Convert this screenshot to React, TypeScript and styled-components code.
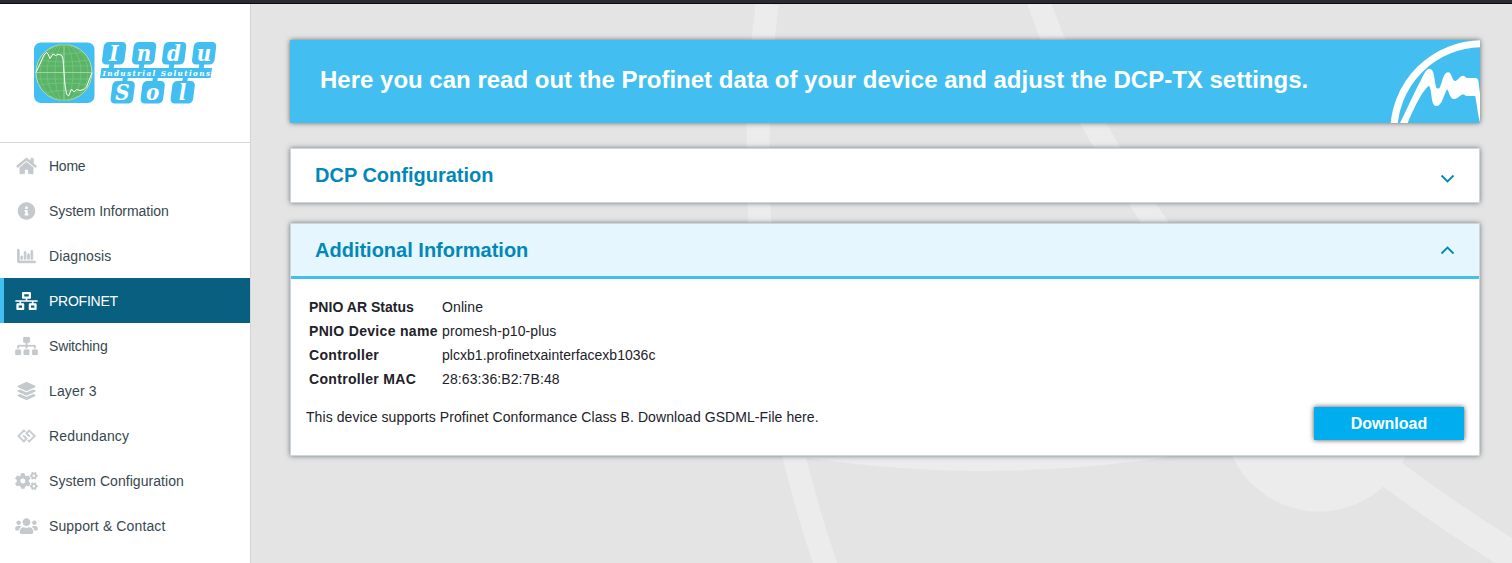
import { useState } from "react";
import type { ReactNode } from "react";
import styled, { createGlobalStyle } from "styled-components";
import {
  FaHome,
  FaInfoCircle,
  FaRegChartBar,
  FaNetworkWired,
  FaSitemap,
  FaLayerGroup,
  FaGg,
  FaCogs,
  FaUsers,
} from "react-icons/fa";

const GlobalStyle = createGlobalStyle`
  * { box-sizing: border-box; }
  body {
    margin: 0;
    overflow: hidden;
    font-family: "Liberation Sans", Arial, sans-serif;
    font-size: 14px;
    color: #212129;
  }
`;

const Page = styled.div`
  display: flex;
  flex-direction: column;
  height: 100vh;
`;

const TopBar = styled.div`
  flex: none;
  height: 4px;
  background: #2b2a33;
  border-bottom: 1px solid #0c0c0d;
`;

const Body = styled.div`
  display: flex;
  flex: 1;
  min-height: 0;
`;

const Sidebar = styled.aside`
  flex: none;
  width: 251px;
  background: #fff;
  border-right: 1px solid #d3d6d8;
`;

const LogoBox = styled.div`
  height: 139px;
  padding: 37px 0 0 33px;
  border-bottom: 1px solid #d3d8db;

  svg { display: block; }
`;

const NavItem = styled.a<{ $active?: boolean; $track: number; $bold?: number }>`
  display: flex;
  align-items: center;
  height: 45px;
  padding-left: ${(p) => (p.$active ? "11px" : "15px")};
  border-left: ${(p) => (p.$active ? "4px solid #42bff0" : "none")};
  background: ${(p) => (p.$active ? "#085f80" : "transparent")};
  color: ${(p) => (p.$active ? "#fff" : "#37474f")};
  letter-spacing: ${(p) => p.$track}px;
  cursor: pointer;

  svg {
    width: 23px;
    height: 18px;
    margin-right: 11px;
    overflow: visible;
    stroke-width: ${(p) => p.$bold || 0};
    color: ${(p) => (p.$active ? "#fff" : "#c3c9cc")};
  }
`;

const Content = styled.main`
  position: relative;
  flex: 1;
  padding: 36px 32px 0 39px;
  background: #e4e4e4;
`;

const Backdrop = styled.svg`
  position: absolute;
  inset: 0;
`;

const Stack = styled.div`
  position: relative;
  display: flex;
  flex-direction: column;
`;

const Banner = styled.header`
  display: flex;
  align-items: center;
  justify-content: space-between;
  height: 83px;
  padding-left: 30px;
  margin-bottom: 25px;
  background: #42bff0;
  box-shadow: 0 0 5px rgba(0, 0, 0, 0.55);
`;

const BannerTitle = styled.h1`
  margin: 0 0 4px;
  font-size: 24px;
  line-height: 28px;
  color: #fff;
  white-space: nowrap;
`;

const Panel = styled.section`
  margin-bottom: 20px;
  background: #fff;
  border: 1px solid #cfd6da;
  box-shadow: 0 0 5px rgba(38, 50, 56, 0.6);
`;

const PanelHeader = styled.div<{ $open: boolean }>`
  display: flex;
  align-items: center;
  justify-content: space-between;
  height: ${(p) => (p.$open ? "55px" : "53px")};
  padding: ${(p) => (p.$open ? "0 24px" : "0 24px 2px")};
  background: ${(p) => (p.$open ? "#e5f6fe" : "#fff")};
  border-bottom: ${(p) => (p.$open ? "3px solid #42bff0" : "none")};
  cursor: pointer;
`;

const PanelTitle = styled.h2`
  margin: 0;
  font-size: 20px;
  line-height: 24px;
  color: #0288b8;
`;

const ArrowIcon = styled.svg<{ $up: boolean }>`
  margin-top: ${(p) => (p.$up ? "0" : "8px")};
`;

const PanelBody = styled.div`
  padding: 16px 15px 15px;
`;

const InfoTable = styled.dl`
  display: grid;
  grid-template-columns: 129px 1fr;
  column-gap: 4px;
  margin: 0 3px;
  line-height: 24px;

  dt { font-weight: bold; letter-spacing: 0.32px; white-space: nowrap; }
  dt:first-of-type { letter-spacing: 0.03px; }
  dd { margin: 0; letter-spacing: 0.1px; }
  dd:nth-of-type(3) { letter-spacing: 0.03px; }
`;

const Footer = styled.div`
  display: flex;
  justify-content: space-between;
  align-items: flex-start;
  margin-top: 16px;
`;

const FooterText = styled.p`
  margin: 2px 0 0;
  line-height: 17px;
  letter-spacing: 0.07px;
`;

const DownloadButton = styled.button`
  width: 150px;
  height: 33px;
  padding: 0;
  border: none;
  background: #00aeef;
  color: #fff;
  font: bold 16px "Liberation Sans", Arial, sans-serif;
  box-shadow: 0 0 5px rgba(0, 0, 0, 0.7);
`;

const navItems = [
  { label: "Home", icon: <FaHome />, track: -0.25, bold: 10 },
  { label: "System Information", icon: <FaInfoCircle />, track: -0.05 },
  { label: "Diagnosis", icon: <FaRegChartBar />, track: 0.1, bold: 24 },
  { label: "PROFINET", icon: <FaNetworkWired />, track: -0.25 },
  { label: "Switching", icon: <FaSitemap />, track: -0.15, bold: 6 },
  { label: "Layer 3", icon: <FaLayerGroup />, track: 0.15 },
  { label: "Redundancy", icon: <FaGg />, track: 0.15, bold: 22 },
  { label: "System Configuration", icon: <FaCogs />, track: 0.05 },
  { label: "Support & Contact", icon: <FaUsers />, track: 0.12 },
];

const info = [
  ["PNIO AR Status", "Online"],
  ["PNIO Device name", "promesh-p10-plus"],
  ["Controller", "plcxb1.profinetxainterfacexb1036c"],
  ["Controller MAC", "28:63:36:B2:7B:48"],
];

// [letter, x, y]
const tiles: [string, number, number][] = [
  ["I", 68.5, 1], ["n", 98.5, 1], ["d", 128.5, 1], ["u", 158.5, 1],
  ["S", 77, 40], ["o", 107, 40], ["l", 137, 40],
];

function Logo() {
  return (
    <svg width="186" height="64" viewBox="0 0 186 64">
      <rect x="1" y="1.5" width="60.5" height="60.5" rx="7" fill="#42bff0" />
      <circle cx="31" cy="31.5" r="28" fill="#5ab466" stroke="#b9dfb4" strokeWidth="1" />
      <g fill="none" stroke="#7cc586" strokeWidth="0.7">
        <ellipse cx="31" cy="31.5" rx="9" ry="28" />
        <ellipse cx="31" cy="31.5" rx="17" ry="28" />
        <ellipse cx="31" cy="31.5" rx="24" ry="28" />
        <path d="M12 11Q31 15 50 11M6 19Q31 23 56 19M4 25H58M4 38H58M6 44Q31 40 56 44M12 52Q31 47 50 52" />
      </g>
      <path d="M3 31.5H59M31 3.5V59.5" stroke="#a5d8a8" strokeWidth="0.900" />
      <path
        d="M3 31.5L11 14L13.500 11.500L15 13L17 17.500L20 13L22.500 14.500L25 13.500L28.500 14L30 18L32 44L33.500 53L35.500 55L38.500 48L41 51L43.500 48.500L47 49.500L51 48.500L53.500 46L59 31.500"
        fill="none" stroke="#fff" strokeWidth="1" strokeLinejoin="round"
      />
      <g fill="#42bff0">
        <path d="M68.500 27H179L177.500 37H67Z" />
        {tiles.map(([c, x, y]) => (
          <rect key={c} x={x} y={y} width="22.500" height="22.500" rx="4.500" transform={`translate(${(y + 22) * 0.125} 0) skewX(-7)`} />
        ))}
        <path d="M76.500 22h5l-1 6h-5zM106.500 22h5l-1 6h-5zM136.500 22h5l-1 6h-5zM166.500 22h5l-1 6h-5zM90 36h5l-1 6h-5zM120 36h5l-1 6h-5zM150 36h5l-1 6h-5z" />
      </g>
      <g fill="#fff" fontFamily="'DejaVu Serif Condensed', 'DejaVu Serif', serif" fontWeight="bold" fontStyle="italic">
        {tiles.map(([c, x, y]) => (
          <text key={c} x={x + 12.500} y={y + 19.300} fontSize="22" textAnchor="middle">{c}</text>
        ))}
        <text x="69.500" y="34.900" fontSize="8" textLength="107.500">Industrial Solutions</text>
      </g>
    </svg>
  );
}

function BannerArt() {
  return (
    <svg width="100" height="83" viewBox="0 0 100 83">
      <circle cx="102" cy="92" r="88.200" fill="none" stroke="#fff" strokeWidth="7.100" />
      <path
        d="M20 83C25 73 32 57 41 40C44 34 46 28.700 49.500 28.700C54.500 28.700 54 39 56 47Q57 49.500 59.500 48C62.500 43 63 32.300 68 32.300C72 32.300 72 41.300 75 41C78 40.500 80 35.700 83 35.700C85 35.700 85.500 38 88 38H95C98 38 98.500 40 98.800 44L100 54V83L98.300 75L95.300 56H87C85 56 84 54.300 83 54.300C80 55 78 59 74 59C70 59 69.500 53 67.300 49.300C64 53 62.500 66 56.500 66C50.500 66 52.500 52 49.300 46C45 47 36 63 27.700 83Z"
        fill="#fff"
      />
    </svg>
  );
}

function Arrow({ up }: { up: boolean }) {
  return (
    <ArrowIcon $up={up} width="15" height="9" viewBox="0 0 15 9">
      <path d={up ? "M1.500 7.500L7.500 1.500L13.500 7.500" : "M1.500 1.500L7.500 7.500L13.500 1.500"} fill="none" stroke="#0288b8" strokeWidth="1.800" />
    </ArrowIcon>
  );
}

function Accordion(props: { title: string; defaultOpen?: boolean; children?: ReactNode }) {
  const [open, setOpen] = useState(!!props.defaultOpen);
  return (
    <Panel>
      <PanelHeader $open={open} onClick={() => setOpen(!open)}>
        <PanelTitle>{props.title}</PanelTitle>
        <Arrow up={open} />
      </PanelHeader>
      {open && props.children}
    </Panel>
  );
}

function App() {
  const [active, setActive] = useState("PROFINET");

  return (
    <Page>
      <GlobalStyle />
      <TopBar />
      <Body>
        <Sidebar>
          <LogoBox>
            <Logo />
          </LogoBox>
          <nav>
            {navItems.map((item) => (
              <NavItem
                key={item.label}
                $active={item.label === active}
                $track={item.track}
                $bold={item.bold}
                onClick={() => setActive(item.label)}
              >
                {item.icon}
                {item.label}
              </NavItem>
            ))}
          </nav>
        </Sidebar>
        <Content>
          <Backdrop width="1261" height="559" viewBox="251 4 1261 559" fill="none" stroke="#ececec" strokeWidth="23">
            <path d="M767 4C749 150 753 350 825 563L834 590" />
            <path d="M1038 0Q1079 120 1176 252" />
            <path d="M770 440Q985 479 1200 440" />
            <path d="M1370 457Q1440 514 1570 591" strokeWidth="30" />
            <circle cx="1319" cy="416" r="95.500" fill="#ececec" stroke="none" />
          </Backdrop>
          <Stack>
            <Banner>
              <BannerTitle>Here you can read out the Profinet data of your device and adjust the DCP-TX settings.</BannerTitle>
              <BannerArt />
            </Banner>
            <Accordion title="DCP Configuration" />
            <Accordion title="Additional Information" defaultOpen>
              <PanelBody>
                <InfoTable>
                  {info.map(([name, value]) => [
                    <dt key={name}>{name}</dt>,
                    <dd key={value}>{value}</dd>,
                  ])}
                </InfoTable>
                <Footer>
                  <FooterText>This device supports Profinet Conformance Class B. Download GSDML-File here.</FooterText>
                  <DownloadButton>Download</DownloadButton>
                </Footer>
              </PanelBody>
            </Accordion>
          </Stack>
        </Content>
      </Body>
    </Page>
  );
}

export default App;
